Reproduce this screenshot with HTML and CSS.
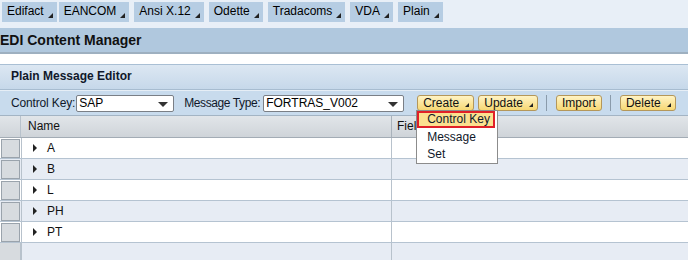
FILE: index.html
```html
<!DOCTYPE html>
<html lang="en">
<head>
    <meta charset="UTF-8">
    <title>EDI Content Manager</title>
    <link rel="stylesheet" href="styles.css">
</head>
<body>
    <!-- standard tabs -->
    <div class="tabbar">
        <span class="tab">Edifact<i class="corner"></i></span>
        <span class="tab">EANCOM<i class="corner"></i></span>
        <span class="tab">Ansi X.12<i class="corner"></i></span>
        <span class="tab">Odette<i class="corner"></i></span>
        <span class="tab">Tradacoms<i class="corner"></i></span>
        <span class="tab">VDA<i class="corner"></i></span>
        <span class="tab">Plain<i class="corner"></i></span>
    </div>
    <div class="titlebar">EDI Content Manager</div>

    <div class="panel">
        <div class="panel-head">Plain Message Editor</div>
        <div class="toolbar">
            <label class="lbl">Control Key:</label>
            <div class="select key">SAP<i class="drop"></i></div>
            <label class="lbl type">Message Type:</label>
            <div class="select msg">FORTRAS_V002<i class="drop"></i></div>
            <div class="menu-wrap">
                <span class="btn">Create<i class="corner"></i></span>
                <div class="menu">
                    <div class="item active">Control Key</div>
                    <div class="item">Message</div>
                    <div class="item">Set</div>
                </div>
            </div>
            <span class="btn">Update<i class="corner"></i></span>
            <span class="sep"></span>
            <span class="btn">Import</span>
            <span class="sep"></span>
            <span class="btn">Delete<i class="corner"></i></span>
        </div>

        <div class="table">
            <div class="row head">
                <div class="sel"></div>
                <div class="cell name">Name</div>
                <div class="cell field">Field</div>
            </div>
            <div class="row">
                <div class="sel"></div>
                <div class="cell name"><i class="expand"></i>A</div>
                <div class="cell field"></div>
            </div>
            <div class="row alt">
                <div class="sel"></div>
                <div class="cell name"><i class="expand"></i>B</div>
                <div class="cell field"></div>
            </div>
            <div class="row">
                <div class="sel"></div>
                <div class="cell name"><i class="expand"></i>L</div>
                <div class="cell field"></div>
            </div>
            <div class="row alt">
                <div class="sel"></div>
                <div class="cell name"><i class="expand"></i>PH</div>
                <div class="cell field"></div>
            </div>
            <div class="row">
                <div class="sel"></div>
                <div class="cell name"><i class="expand"></i>PT</div>
                <div class="cell field"></div>
            </div>
            <div class="row alt empty">
                <div class="sel"></div>
                <div class="cell name"></div>
                <div class="cell field"></div>
            </div>
        </div>
    </div>
</body>
</html>
```

FILE: styles.css
```css
body {
    margin: 0;
    font-family: Arial, "Liberation Sans", sans-serif;
    font-size: 12px;
    color: #000;
    background: #fff;
    overflow: hidden;
    height: 260px;
}
.tabbar {
    display: flex;
    gap: 5px;
    height: 28px;
    padding: 2px 0 0 2px;
    box-sizing: border-box;
    background: #e8eff7;
}
.tab {
    position: relative;
    height: 20px;
    line-height: 19px;
    padding: 0 13px 0 5px;
    background: #b6cde3;
    color: #000;
}
.tab:nth-child(2) { margin-left: -3px; }
.corner {
    position: absolute;
    right: 4px;
    bottom: 4px;
    width: 0;
    height: 0;
    border-left: 5px solid transparent;
    border-bottom: 5px solid #222;
}
.titlebar {
    height: 24px;
    line-height: 24px;
    background: #b0c8de;
    font-weight: bold;
    font-size: 14px;
    color: #111;
    border-bottom: 2px solid #9eb0c0;
}
.panel {
    margin-top: 10px;
    border-top: 1px solid #a9bfd4;
}
.panel-head {
    height: 24px;
    line-height: 22px;
    padding-left: 11px;
    font-weight: bold;
    color: #10182a;
    background: linear-gradient(#dce7f2, #c6d8ea);
    border-bottom: 1px solid #a7bcd0;
}
.toolbar {
    display: flex;
    align-items: center;
    height: 25px;
    padding-left: 11px;
    background: #c8dbed;
    border-top: 1px solid #e6eef6;
    box-sizing: border-box;
    color: #10182a;
    white-space: nowrap;
}
.toolbar > * {
    flex: none;
}
.lbl {
    letter-spacing: -0.15px;
}
.lbl.type {
    margin-left: 10px;
    letter-spacing: -0.4px;
}
.select {
    position: relative;
    height: 15px;
    line-height: 15px;
    margin-left: 1px;
    padding-left: 2px;
    background: #fff;
    border: 1px solid #7a7f86;
    border-radius: 2px;
    color: #000;
    box-sizing: content-box;
}
.select.key { width: 94px; }
.select.msg {
    width: 137px;
    margin-left: 3px;
}
.drop {
    position: absolute;
    right: 5px;
    top: 6px;
    border-left: 5px solid transparent;
    border-right: 5px solid transparent;
    border-top: 5px solid #333;
}
.menu-wrap {
    position: relative;
    margin-left: 13px;
    display: flex;
}
.btn {
    position: relative;
    height: 14px;
    line-height: 14px;
    padding: 0 14px 0 5px;
    margin-right: 4px;
    background: linear-gradient(#fff3c4, #f7d874);
    border: 1px solid #b4975a;
    border-radius: 3px;
    color: #111;
}
.btn .corner {
    right: 4px;
    bottom: 3px;
    border-left-width: 4px;
    border-bottom-width: 4px;
}
.btn:not(:has(.corner)) {
    padding-right: 5px;
}
.sep {
    width: 1px;
    height: 16px;
    margin: 0 9px 0 4px;
    background: #8a9bab;
}
.menu {
    position: absolute;
    left: -1px;
    top: 15px;
    width: 80px;
    padding: 0;
    background: #fff;
    border: 1px solid #8c8c8c;
    z-index: 2;
}
.item {
    height: 17px;
    line-height: 17px;
    padding-left: 10px;
    color: #10182a;
}
.item.active {
    height: 13px;
    line-height: 13px;
    margin: 0 2px 1px 0;
    padding-left: 8px;
    background: #fbe08f;
    border: 2px solid #e02028;
}
.table {
    border-top: 1px solid #a3b4c4;
}
.row {
    display: flex;
    height: 20px;
    border-bottom: 1px solid #b5c3d1;
    background: #fff;
}
.row.alt {
    background: #e7ecf4;
}
.row.head {
    height: 21px;
    background: linear-gradient(#e1e5e9, #cfd4d9);
    border-bottom: 1px solid #a3acb5;
}
.sel {
    width: 19px;
    flex: none;
    margin: 1px 1px 0 1px;
    background: #d7dbdf;
    border: 1px solid #9aa3ac;
    box-sizing: border-box;
}
.head .sel, .empty .sel {
    margin: 0;
    width: 21px;
    border: none;
    border-right: 1px solid #b8c2cc;
}
.head .sel { background: transparent; }
.empty .sel { background: #d7dbdf; }
.cell {
    line-height: 20px;
    border-left: 1px solid #b8c2cc;
    box-sizing: border-box;
    color: #111;
}
.head .cell {
    line-height: 21px;
    border-left: 1px solid #a9b2bb;
}
.head .sel + .cell { border-left: none; }
.name {
    width: 370px;
    padding-left: 6px;
}
.head .name { padding-left: 7px; }
.field {
    flex: 1;
    padding-left: 5px;
}
.expand {
    display: inline-block;
    width: 0;
    height: 0;
    margin: 0 10px 0 5px;
    border-top: 4px solid transparent;
    border-bottom: 4px solid transparent;
    border-left: 4px solid #222;
}
```
